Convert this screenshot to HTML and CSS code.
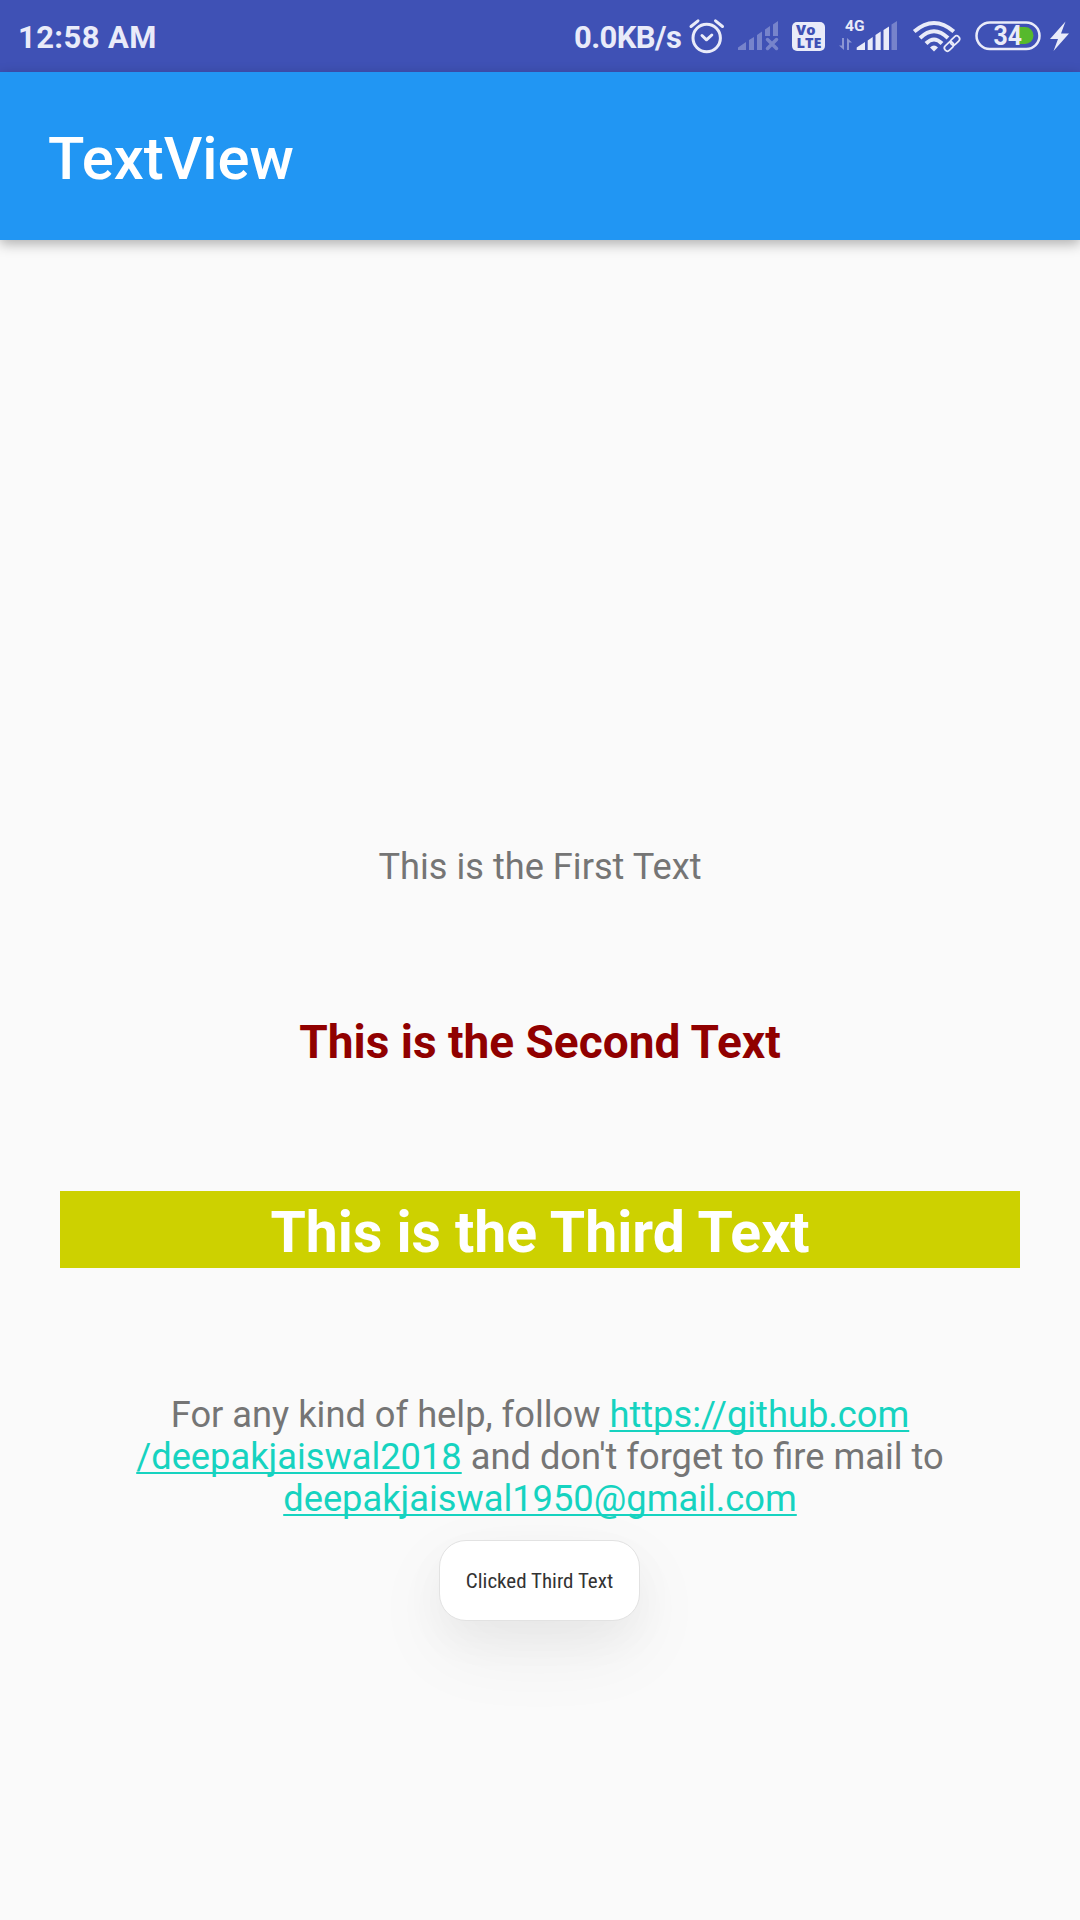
FILE: index.html
```html
<!DOCTYPE html>
<html lang="en">
<head>
<meta charset="utf-8">
<title>TextView</title>
<link rel="stylesheet" href="styles.css">
</head>
<body>
<div class="screen">
  <header class="status">
    <span class="clock">12:58 AM</span>
    <span class="speed">0.0KB/s</span>
    <svg class="icons" width="400" height="72" viewBox="680 0 400 72" fill="#e9ebf9">
      <!-- alarm -->
      <g fill="none" stroke="#e9ebf9" stroke-width="3" stroke-linecap="round" stroke-linejoin="round">
        <circle cx="706.7" cy="38" r="13.7"/>
        <path d="M691 26.5L698 20.8M715.500 20.800L722.500 26.500"/>
        <path d="M702 35.500L706.500 39.800L711.800 35"/>
      </g>
      <!-- inactive SIM -->
      <g class="faint">
        <path d="M738 50V47.500L746 42V50ZM749 50V40L754 37V50ZM757 50V35L762 31.500V50ZM765 36V29.500L770 26V36ZM773 36V24.500L778 21V36Z"/>
        <path d="M767.500 39.500L776.500 48.500M776.500 39.500L767.500 48.500" fill="none" stroke="#e9ebf9" stroke-width="3.500" stroke-linecap="round"/>
      </g>
      <!-- VoLTE -->
      <rect x="792" y="22" width="33" height="29" rx="5"/>
      <text class="volte" x="796" y="35" textLength="19.500" lengthAdjust="spacingAndGlyphs">Vo</text>
      <text class="volte" x="796.500" y="47.700" textLength="25" lengthAdjust="spacingAndGlyphs">LTE</text>
      <!-- 4G -->
      <text class="net" x="845" y="31" textLength="19.500" lengthAdjust="spacingAndGlyphs">4G</text>
      <path class="mid" d="M842 38H844V50L839 45.500H842ZM847 50V38L852 42.500H849V50Z"/>
      <path d="M856.700 50V47.500L865 42V50ZM867.700 50V40.500L872.700 37V50ZM875.500 50V35L880.700 31.500V50ZM883.500 50V30L889 26.500V50Z"/>
      <path class="faint" d="M891.500 50V24.500L897 21V50Z"/>
      <!-- wifi -->
      <g fill="none" stroke="#e9ebf9" stroke-width="4">
        <path d="M914.200 31.500Q934 14.500 953.800 31.500"/>
        <path d="M920 38Q934 24.500 948 38"/>
        <path d="M926 43.500Q934 35.500 942 43.500"/>
      </g>
      <path d="M934 51.500L930 47.500Q934 43.500 938 47.500Z"/>
      <g fill="none" stroke="#e9ebf9" stroke-width="1.700" transform="rotate(-45 952 43.500)">
        <rect x="942.500" y="40.500" width="10.500" height="6" rx="3"/>
        <rect x="951" y="40.500" width="10.500" height="6" rx="3"/>
      </g>
      <!-- battery -->
      <path d="M1018 27H1025A8.500 8.500 0 0 1 1025 44H1018Z" fill="#56b92c"/>
      <rect x="976.500" y="22.500" width="63" height="26.500" rx="13.250" fill="none" stroke="#e9ebf9" stroke-width="2.500"/>
      <text class="charge" x="993.500" y="45" textLength="28.500" lengthAdjust="spacingAndGlyphs">34</text>
      <path d="M1065.500 21.500L1050 39H1058L1053.500 51L1069 33.500H1061Z"/>
    </svg>
  </header>
  <div class="appbar"><h1>TextView</h1></div>
  <main class="content">
    <p class="first">This is the First Text</p>
    <p class="second">This is the Second Text</p>
    <p class="third">This is the Third Text</p>
    <p class="help">For any kind of help, follow <a>https://github.com</a><br><a>/deepakjaiswal2018</a> and don't forget to fire mail to<br><a>deepakjaiswal1950@gmail.com</a></p>
  </main>
  <div class="toast"><span>Clicked Third Text</span></div>
</div>
</body>
</html>
```
FILE: styles.css
```css
* { box-sizing: border-box; margin: 0; padding: 0; }
body { font-family: Roboto, "Liberation Sans", sans-serif; background: #fafafa; }
.screen { position: relative; width: 1080px; height: 1920px; overflow: hidden; background: #fafafa; }
.status { display: flex; height: 72px; background: #3f51b5; color: #e9ebf9; font-weight: 700; font-size: 31px; line-height: 75px; white-space: nowrap; }
.clock { width: 574px; padding-left: 18px; letter-spacing: .4px; }
.speed { width: 106px; letter-spacing: -.6px; }
.icons { flex: none; }
.faint { opacity: .33; }
.mid { opacity: .45; }
.volte { font: 800 13.500px "Open Sans", sans-serif; fill: #3f51b5; }
.net { font: 700 15.500px Roboto, sans-serif; }
.charge { font: 700 27px Roboto, sans-serif; }
.appbar { height: 168px; padding-left: 48px; background: #2196f3; color: #fff; box-shadow: 0 4px 12px rgba(0, 0, 0, .3); }
.appbar h1 { font-size: 59.800px; font-weight: 500; line-height: 174px; }
.content { padding: 603px 60px 0; text-align: center; }
.first { font-size: 36.200px; line-height: 48px; color: #757575; }
.second { margin-top: 119px; font-size: 46px; font-weight: 700; line-height: 64px; color: #900000; }
.third { margin-top: 117px; height: 77px; font-size: 57.100px; font-weight: 700; line-height: 83px; background: #cdd100; color: #fff; }
.help { margin-top: 126px; font-size: 36.250px; line-height: 42px; color: #757575; }
.help a { color: #16d3c0; text-decoration: underline; text-decoration-thickness: 2px; text-underline-offset: 3px; text-decoration-skip-ink: none; }
.toast { position: absolute; left: 439px; top: 1540px; width: 201px; height: 81px; display: flex; justify-content: center; border: 1px solid #e2e2e2; border-radius: 27px; background: #fff; color: #333; box-shadow: 0 28px 80px rgba(0, 0, 0, .06), 0 18px 44px rgba(0, 0, 0, .04); }
.toast span { font-family: "Roboto Condensed", Roboto, sans-serif; font-stretch: 75%; font-size: 21px; line-height: 81px; white-space: nowrap; }
```
